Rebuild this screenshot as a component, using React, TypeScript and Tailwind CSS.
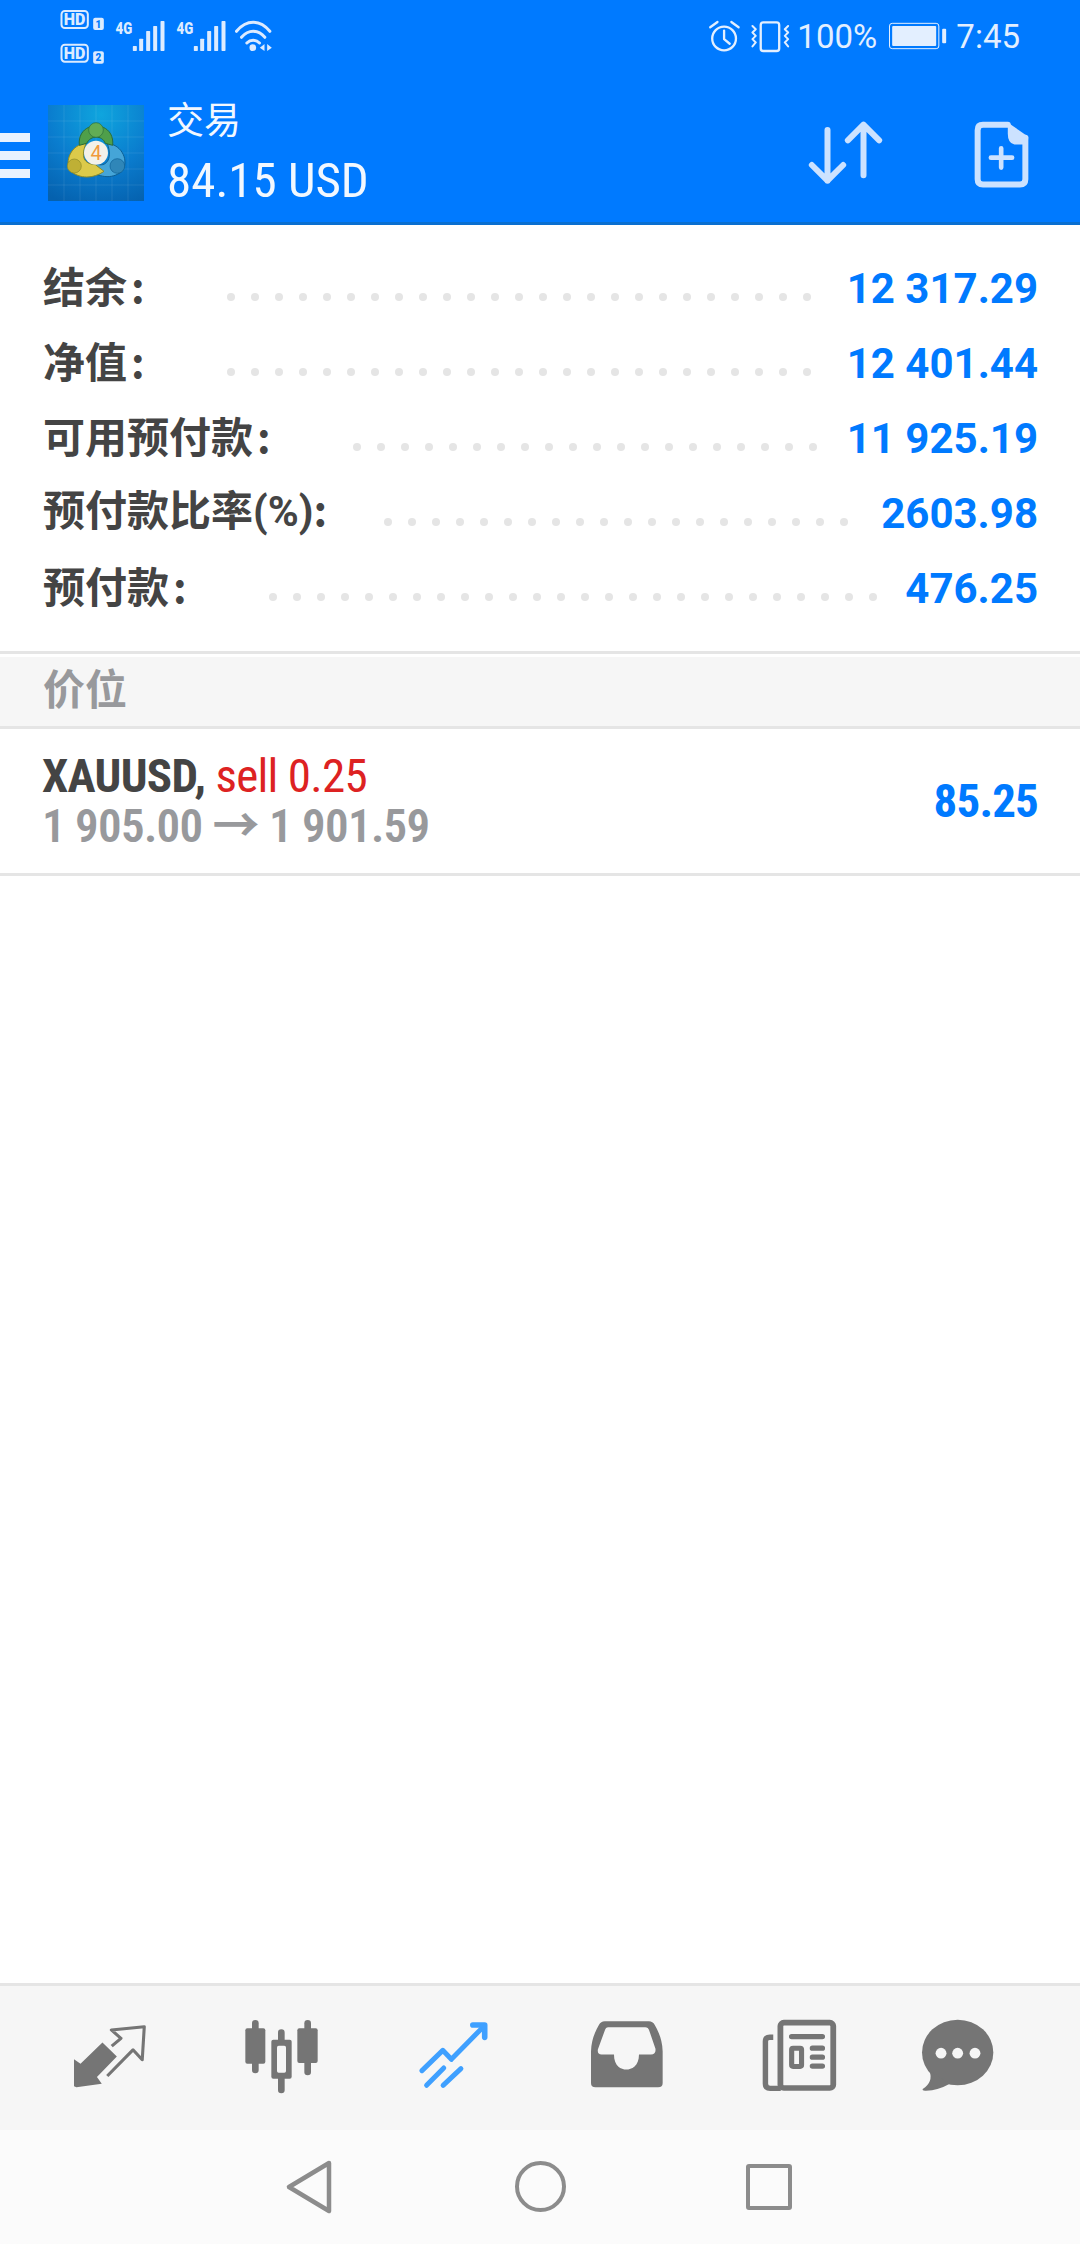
const fontMain = "font-['Roboto','Noto_Sans_CJK_SC',sans-serif]";
const fontLabel = "font-['Noto_Sans_CJK_SC',sans-serif]";

const accountRows = [
  { label: '结余', value: '12 317.29', dots: 25, width: 'w-[184px]' },
  { label: '净值', value: '12 401.44', dots: 25, width: 'w-[184px]' },
  { label: '可用预付款', value: '11 925.19', dots: 20, width: 'w-[310px]' },
  { label: '预付款比率', suffix: '(%)', value: '2603.98', dots: 20, width: 'w-[341px]' },
  { label: '预付款', value: '476.25', dots: 26, width: 'w-[226px]' },
];

function StatusLeft() {
  const bars = [
    [397, 150],
    [416, 128],
    [437, 105],
    [458, 90],
    [480, 75],
  ];
  return (
    <svg viewBox="170 30 650 180" width="217" height="60" className="ml-[57px]" fill="#dcebff">
      <rect x="183" y="45" width="79" height="51" rx="10" fill="none" stroke="#dcebff" strokeWidth="6" />
      <text x="222" y="87" textAnchor="middle" fontFamily="Roboto" fontWeight="900" fontSize="48">HD</text>
      <rect x="278" y="65" width="32" height="37" rx="6" />
      <text x="294" y="95" textAnchor="middle" fontFamily="Roboto" fontWeight="900" fontSize="30" fill="#007aff">1</text>
      <rect x="183" y="146" width="79" height="51" rx="10" fill="none" stroke="#dcebff" strokeWidth="6" />
      <text x="222" y="188" textAnchor="middle" fontFamily="Roboto" fontWeight="900" fontSize="48">HD</text>
      <rect x="278" y="166" width="32" height="37" rx="6" />
      <text x="294" y="196" textAnchor="middle" fontFamily="Roboto" fontWeight="900" fontSize="30" fill="#007aff">2</text>
      {[0, 183].map((dx) => (
        <g key={dx} transform={`translate(${dx} 0)`}>
          <text x="345" y="114" fontFamily="Roboto" fontWeight="900" fontSize="52" textLength="50" lengthAdjust="spacingAndGlyphs">4G</text>
          {bars.map(([x, y]) => (
            <rect key={x} x={x} y={y} width="12" height={165 - y} rx="2" />
          ))}
        </g>
      ))}
      <g fill="none" stroke="#dcebff" strokeWidth="9" strokeLinecap="round">
        <path d="M708 106 C738 70 778 70 808 106" />
        <path d="M723 124 C744 100 772 100 793 124" />
        <path d="M739 141 C750 130 766 130 777 141" />
      </g>
      <circle cx="757" cy="155" r="10" />
      <path d="M792 144 V165 L778 155 Z M800 144 V165 L814 155 Z" />
    </svg>
  );
}

function StatusRight() {
  return (
    <div className="flex items-center mr-[60px] text-[33px] leading-none text-[#e3efff] font-['Roboto',sans-serif]">
      <svg viewBox="90 70 250 100" width="83" height="33" fill="none" stroke="#e3efff" strokeWidth="7" strokeLinecap="round" strokeLinejoin="round">
        <circle cx="138" cy="126" r="36" />
        <path d="M138 102 V128 L155 142 M96 92 L118 76 M160 76 L182 92" />
        <rect x="249" y="77" width="56" height="87" rx="8" />
        <path d="M224 88 L234 98 L224 108 L234 118 L224 128 L234 138 L224 150 M332 88 L322 98 L332 108 L322 118 L332 128 L322 138 L332 150" strokeWidth="6" />
      </svg>
      <span className="ml-[6px] w-[80px]">100%</span>
      <svg viewBox="626 78 176 84" width="59" height="28" className="ml-[11px]">
        <rect x="630" y="82" width="148" height="76" rx="8" fill="none" stroke="#e3efff" strokeWidth="3" />
        <rect x="638" y="90" width="132" height="60" rx="3" fill="#e3efff" />
        <rect x="788" y="98" width="12" height="44" rx="3" fill="#e3efff" />
      </svg>
      <span className="ml-[9px]">7:45</span>
    </div>
  );
}

function Mt4Logo() {
  return (
    <svg viewBox="54 45 288 288" width="96" height="96" className="ml-[18px] shrink-0">
      <defs>
        <radialGradient id="logoBg" cx="0.55" cy="0.1" r="1">
          <stop offset="0" stopColor="#0fa5de" />
          <stop offset="0.55" stopColor="#0a7cce" />
          <stop offset="1" stopColor="#0561ae" />
        </radialGradient>
      </defs>
      <rect x="54" y="45" width="288" height="288" fill="url(#logoBg)" />
      <path d="M102 45 V333 M150 45 V333 M198 45 V333 M246 45 V333 M294 45 V333 M54 93 H342 M54 141 H342 M54 189 H342 M54 237 H342 M54 285 H342" stroke="#ffffff" strokeOpacity="0.09" strokeWidth="3" />
      <path d="M232 160 C278 164 298 216 276 244 C244 270 205 262 172 236 L200 222 C225 232 250 212 232 160 Z" fill="#45a5d8" stroke="#0d5f94" strokeWidth="3" />
      <circle cx="262" cy="228" r="22" fill="#2f86b8" stroke="#0d5f94" strokeWidth="2" />
      <path d="M168 160 C122 164 104 214 120 242 C150 268 190 266 222 244 L196 224 C170 222 148 210 168 160 Z" fill="#dcca4a" stroke="#8d8a25" strokeWidth="3" />
      <circle cx="133" cy="228" r="21" fill="#bfb035" stroke="#8d8a25" strokeWidth="2" />
      <path d="M148 166 C140 88 256 88 248 166 L226 160 C216 135 182 135 170 160 Z" fill="#4f9f4a" stroke="#2a6d3a" strokeWidth="3" />
      <circle cx="198" cy="120" r="22" fill="#62ad55" stroke="#2a6d3a" strokeWidth="2" />
      <circle cx="198" cy="188" r="36" fill="#f3f1ea" />
      <text x="198" y="209" textAnchor="middle" fontFamily="Roboto" fontSize="60" fill="#f09a3e">4</text>
    </svg>
  );
}

function TransferIcon() {
  return (
    <svg viewBox="380 360 230 195" width="77" height="65" fill="none" stroke="#cce2ff" strokeWidth="18" strokeLinecap="round" strokeLinejoin="round">
      <path d="M444 390 V542 M397 495 L444 542 L491 495 M552 526 V374 M505 421 L552 374 L599 421" />
    </svg>
  );
}

function NewOrderIcon() {
  return (
    <svg viewBox="880 355 172 207" width="57" height="69" fill="none" stroke="#cce2ff" strokeLinecap="round" strokeLinejoin="round">
      <path d="M985 369 H910 Q894 369 894 385 V533 Q894 549 910 549 H1022 Q1038 549 1038 533 V408" strokeWidth="18" />
      <path d="M985 362 L1047 405 Q1047 428 1030 428 H1005 Q985 425 985 395 Z" fill="#cce2ff" stroke="none" />
      <path d="M965 440 V498 M934 468 H998" strokeWidth="14" />
    </svg>
  );
}

function TradeTab() {
  return (
    <svg viewBox="215 165 210 190" width="72" height="63" preserveAspectRatio="none" fill="none" className="mt-[39px] ml-[74px]">
      <path d="M215 268 L234 282 L298 218 L340 260 L282 322 L296 342 L222 353 L215 350 Z" fill="#757575" />
      <path d="M325 229 L352 205 L324 180 L420 170 L414 270 L387 240 L312 319" stroke="#757575" strokeWidth="9" strokeLinejoin="round" />
    </svg>
  );
}

function ChartTab() {
  return (
    <svg viewBox="705 145 225 225" width="75" height="75" preserveAspectRatio="none" fill="#757575" className="mt-[33px] ml-[98px]" fillRule="evenodd">
      <rect x="729" y="148" width="20" height="160" rx="10" />
      <rect x="709" y="173" width="60" height="106" rx="6" />
      <rect x="886" y="148" width="20" height="166" rx="10" />
      <rect x="865" y="173" width="61" height="104" rx="6" />
      <rect x="807" y="176" width="20" height="192" rx="10" />
      <rect x="787" y="207" width="61" height="117" rx="6" />
      <rect x="804" y="225" width="27" height="81" rx="5" fill="#f6f6f6" />
    </svg>
  );
}

function PositionsTab() {
  return (
    <svg viewBox="1210 150 215 210" width="71" height="70" preserveAspectRatio="none" fill="none" stroke="#3fa0ff" strokeLinecap="round" strokeLinejoin="round" className="mt-[34px] ml-[99px]">
      <path d="M1222 302 L1285 241 L1311 268 L1408 170" strokeWidth="15" />
      <path d="M1376 165 H1412 V202" strokeWidth="17" />
      <path d="M1236 346 L1288 294 M1286 346 L1340 296" strokeWidth="15" />
    </svg>
  );
}

function InboxTab() {
  return (
    <svg viewBox="147 155 210 200" width="72" height="67" preserveAspectRatio="none" className="mt-[35px] ml-[102px]" fill="#757575">
      <path
        fillRule="evenodd"
        d="M187 156 H316 Q327 156 333 167 Q355 205 356 245 V340 Q356 353 343 353 H160 Q147 353 147 340 V245 Q148 205 170 167 Q176 156 187 156 Z M197 174 H305 Q314 174 317 184 L335 238 Q337 255 322 255 H287 C287 290 265 300 250 300 C235 300 214 290 214 255 H178 Q165 255 167 240 L187 184 Q190 174 197 174 Z"
      />
    </svg>
  );
}

function NewsTab() {
  return (
    <svg viewBox="645 145 220 220" width="75" height="73" preserveAspectRatio="none" fill="none" stroke="#757575" className="mt-[33px] ml-[99px]">
      <rect x="699" y="156" width="155" height="197" rx="10" strokeWidth="17" />
      <path d="M678 200 H668 Q655 200 655 212 V340 Q655 354 669 354 H700" strokeWidth="16" />
      <path d="M732 198 H822 M793 233 H822 M793 260 H822 M793 287 H822" strokeWidth="16" strokeLinecap="round" />
      <rect x="732" y="233" width="29" height="55" rx="4" strokeWidth="15" />
    </svg>
  );
}

function ChatTab() {
  return (
    <svg viewBox="1105 145 215 220" width="73" height="73" preserveAspectRatio="none" className="mt-[33px] ml-[84px]">
      <ellipse cx="1213" cy="246" rx="105" ry="99" fill="#757575" />
      <path d="M1130 300 Q1142 335 1110 356 Q1108 362 1120 361 Q1155 360 1190 340 Z" fill="#757575" />
      <circle cx="1164" cy="248" r="16" fill="#f6f6f6" />
      <circle cx="1213" cy="248" r="16" fill="#f6f6f6" />
      <circle cx="1264" cy="248" r="16" fill="#f6f6f6" />
    </svg>
  );
}

export default function App() {
  return (
    <div className={`w-[1080px] h-[2244px] flex flex-col bg-white overflow-hidden ${fontMain}`}>
      <header className="h-[225px] shrink-0 bg-[#007aff] border-b-[3px] border-[#0a6fd0] flex flex-col">
        <div className="h-[72px] flex items-center justify-between">
          <StatusLeft />
          <StatusRight />
        </div>
        <div className="flex-1 flex items-start">
          <div className="w-[30px] mt-[61px] flex flex-col gap-[9px] shrink-0">
            <div className="h-[9px] bg-[#e8f2ff]" />
            <div className="h-[9px] bg-[#e8f2ff]" />
            <div className="h-[9px] bg-[#e8f2ff]" />
          </div>
          <div className="mt-[33px]">
            <Mt4Logo />
          </div>
          <div className="ml-[23px] mt-[27px] text-[#f2f8ff]">
            <div className="text-[37px] leading-[46px]">交易</div>
            <div className="mt-[8px] text-[49px] leading-[56px] [font-stretch:75%]">84.15 USD</div>
          </div>
          <div className="ml-auto mt-[48px] flex">
            <TransferIcon />
            <div className="ml-[90px] mr-[50px]">
              <NewOrderIcon />
            </div>
          </div>
        </div>
      </header>

      <section className="pt-[26px] pb-[25px] pl-[43px] pr-[42px]">
        {accountRows.map((row) => (
          <div key={row.label} className="h-[75px] flex items-center">
            <span className={`${row.width} shrink-0 pb-[8px] text-[42px] font-bold text-[#444444] ${fontLabel}`}>
              {row.label}
              {row.suffix ? (
                <>
                  <span className="font-['Roboto',sans-serif]">{row.suffix}</span>:
                </>
              ) : (
                <span className="ml-[4px]">:</span>
              )}
            </span>
            <div className="flex gap-[16px] mt-[16px]">
              {Array.from({ length: row.dots }).map((_, i) => (
                <span key={i} className="w-[8px] h-[8px] rounded-full bg-[#e5e5e5]" />
              ))}
            </div>
            <span className="ml-auto font-bold text-[42px] text-[#007aff]">{row.value}</span>
          </div>
        ))}
      </section>

      <div className="h-[3px] bg-[#e5e5e5]" />
      <div className="h-[3px] bg-white" />
      <div className={`h-[69px] bg-[#f6f6f6] pl-[43px] pb-[11px] flex items-center text-[42px] font-bold text-[#98999c] ${fontLabel}`}>价位</div>
      <div className="h-[3px] bg-[#e5e5e5]" />

      <div className="h-[144px] pl-[42px] pr-[42px] flex items-center">
        <div className="text-[47px] leading-[50px] tracking-[-0.7px] [font-stretch:75%]">
          <div>
            <span className="font-bold text-[#444444]">XAUUSD,</span> <span className="text-[#dd2222]">sell 0.25</span>
          </div>
          <div className="font-semibold text-[#98999c]">1 905.00 → 1 901.59</div>
        </div>
        <span className="ml-auto text-[47px] font-bold tracking-[-0.85px] text-[#007aff] [font-stretch:75%]">85.25</span>
      </div>
      <div className="h-[3px] bg-[#e5e5e5]" />

      <div className="flex-1" />

      <div className="h-[3px] bg-[#e5e5e5]" />
      <nav className="h-[144px] bg-[#f6f6f6] flex items-start">
        <TradeTab />
        <ChartTab />
        <PositionsTab />
        <InboxTab />
        <NewsTab />
        <ChatTab />
      </nav>

      <div className="h-[114px] bg-[#fbfbfb] flex items-start">
        <svg viewBox="0 0 48 56" width="48" height="56" fill="none" stroke="#8c8c8c" strokeWidth="4.5" strokeLinejoin="round" className="ml-[285px] mt-[29px]">
          <path d="M44 4 L4 28 L44 52 Z" />
        </svg>
        <div className="ml-[182px] mt-[31px] w-[51px] h-[51px] rounded-full border-[4px] border-[#8c8c8c]" />
        <div className="ml-[180px] mt-[34px] w-[46px] h-[46px] rounded-[3px] border-[4px] border-[#8c8c8c]" />
      </div>
    </div>
  );
}
